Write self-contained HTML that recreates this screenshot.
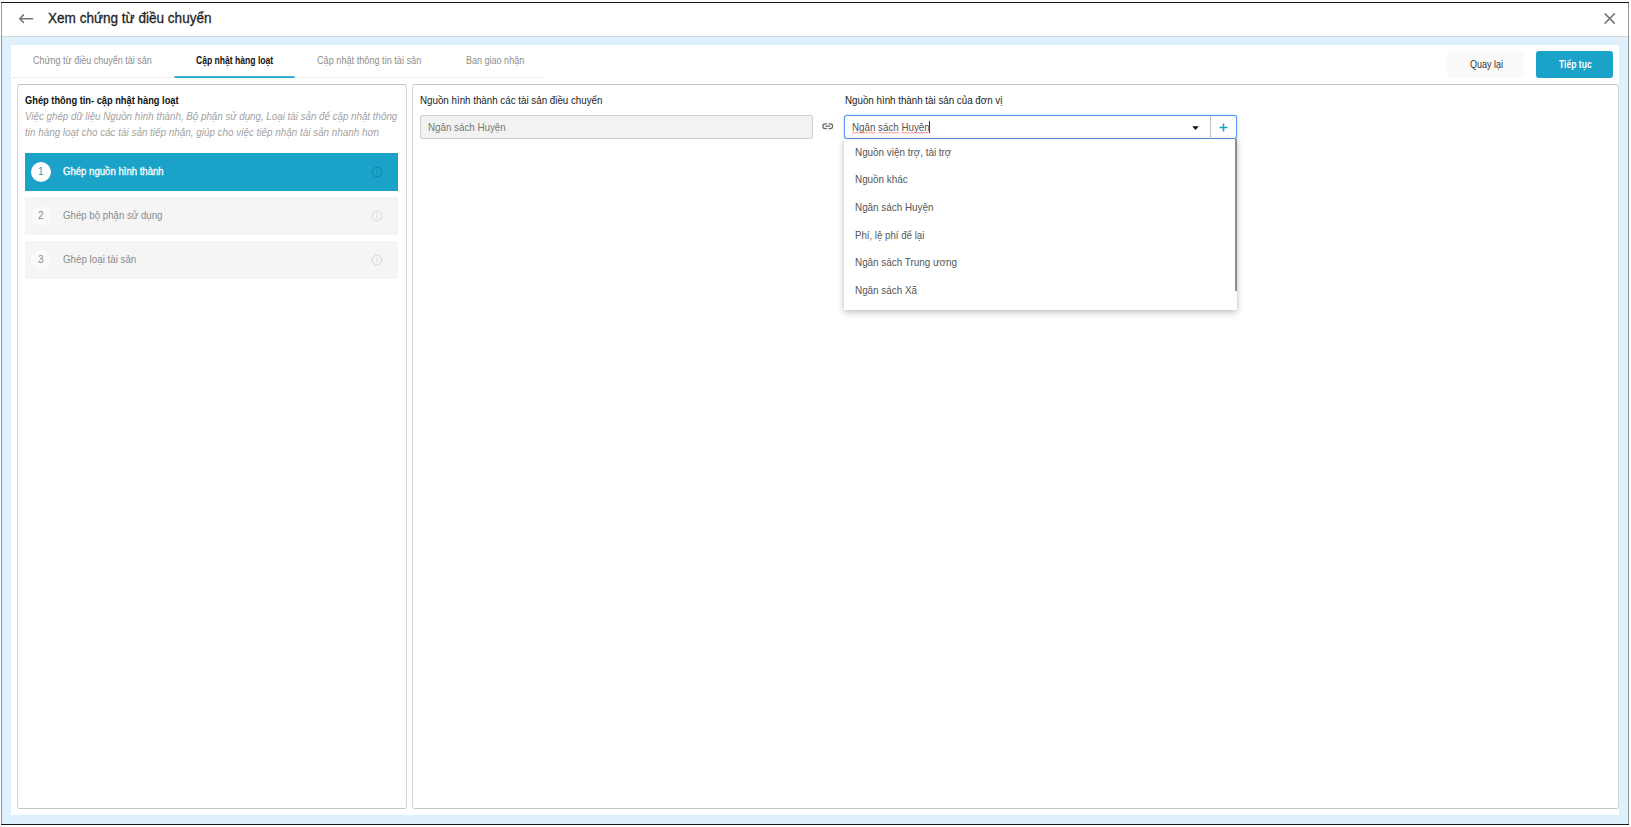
<!DOCTYPE html>
<html lang="vi">
<head>
<meta charset="utf-8">
<title>Xem chứng từ điều chuyển</title>
<style>
*{box-sizing:border-box;margin:0;padding:0}
html,body{width:1631px;height:827px;overflow:hidden;background:#fff}
body{position:relative;font-family:"Liberation Sans",sans-serif;font-size:11px;color:#222}
.abs{position:absolute}
.t{position:absolute;white-space:nowrap;line-height:1;transform-origin:0 0;transform:scaleX(.94)}
.t.b{transform:scaleX(.893)}
.t.m{-webkit-text-stroke:.3px currentColor}
#win{left:1px;top:2px;width:1628px;height:823px;background:#dff1fd}
.bd{position:absolute;z-index:9}
#hdr{left:1px;top:3px;width:1628px;height:34px;background:#fff;border-bottom:1px solid #d6d8da}
#card{left:11px;top:45px;width:1608px;height:770px;background:#fff}
#tabline{left:11px;top:77px;width:534px;height:1px;background:#efefef}
#tabactive{left:174px;top:76px;width:121px;height:2px;background:linear-gradient(#4db6d4 0,#4db6d4 50%,#1ba2c8 50%,#1ba2c8 100%);border-radius:0 0 2px 2px}
.btn{position:absolute;top:51px;width:77px;height:27px;border-radius:3px}
#b1{left:1447px;background:#fafafa}
#b2{left:1536px;background:#1ba2c8}
.panel{position:absolute;top:84px;height:725px;border:1px solid #d5d5d5;border-top-color:#c6c6c6;border-bottom-color:#c6c6c6;border-radius:3px;background:#fff}
#pl{left:17px;width:390px}
#pr{left:412px;width:1207px}
.step{position:absolute;left:25px;width:373px;height:38px;background:#f5f5f5}
.step.on{background:#1ba2c8}
.circ{position:absolute;left:6px;top:9px;width:20px;height:20px;border-radius:50%;background:#fafafa}
.step.on .circ{background:#fff}
.info{position:absolute;left:345.8px;top:13px;width:12px;height:12px}
#inp1{left:420px;top:115px;width:393px;height:24px;background:#f2f2f2;border:1px solid #cfcfcf;border-radius:2px}
#combo{left:844px;top:115px;width:393px;height:24px;background:#fff;border:1px solid #5b97f2;border-radius:3px;box-shadow:0 0 1.5px #5b97f2}
#sep{left:1210px;top:115.5px;width:1px;height:23px;background:#c6c6c6}
#dd{left:844px;top:139px;width:393px;height:171px;background:#fff;box-shadow:0 3px 7px rgba(0,0,0,.2), 0 0 4px rgba(0,0,0,.13)}
#thumb{left:1235px;top:139.4px;width:2px;height:152px;background:#8e8e8e}
</style>
</head>
<body>
<div id="win" class="abs"></div>
<div id="hdr" class="abs"></div>
<svg class="abs" style="left:18px;top:13px" width="16" height="12" viewBox="0 0 16 12"><path d="M5.5 1.9 L1.7 5.7 L5.5 9.5 M1.9 5.7 H14.6" fill="none" stroke="#757575" stroke-width="1.5" stroke-linecap="round" stroke-linejoin="round"/></svg>
<div class="t m" id="title" style="left:47.5px;top:11px;font-size:14px;transform:scaleX(.968);color:#1f1f1f">Xem chứng từ điều chuyển</div>
<svg class="abs" style="left:1603px;top:12px" width="14" height="14" viewBox="0 0 14 14"><path d="M2.1 1.9 L11.3 11.1 M11.3 1.9 L2.1 11.1" fill="none" stroke="#757575" stroke-width="1.5" stroke-linecap="round"/></svg>

<div id="card" class="abs"></div>
<div id="tabline" class="abs"></div>
<div id="tabactive" class="abs"></div>
<div class="t" id="tab1" style="left:33px;top:56px;font-size:10px;transform:scaleX(.902);color:#8e8e8e">Chứng từ điều chuyển tài sản</div>
<div class="t b" id="tab2" style="left:196px;top:56px;font-size:10px;transform:scaleX(.857);font-weight:bold;color:#111">Cập nhật hàng loạt</div>
<div class="t" id="tab3" style="left:317px;top:56px;font-size:10px;transform:scaleX(.915);color:#8e8e8e">Cập nhật thông tin tài sản</div>
<div class="t" id="tab4" style="left:466px;top:56px;font-size:10px;transform:scaleX(.902);color:#8e8e8e">Ban giao nhận</div>

<div id="b1" class="btn"></div>
<div id="b2" class="btn"></div>
<div class="t" id="bt1" style="left:1469.5px;top:59.5px;font-size:10px;transform:scaleX(.902);color:#333">Quay lại</div>
<div class="t b" id="bt2" style="left:1558.5px;top:59.5px;font-size:10px;transform:scaleX(.857);font-weight:bold;color:#fff">Tiếp tục</div>

<div id="pl" class="panel"></div>
<div id="pr" class="panel"></div>

<div class="t b" id="ptitle" style="left:25px;top:95.5px;font-size:10.4px;font-weight:bold;color:#111">Ghép thông tin- cập nhật hàng loạt</div>
<div class="t" id="pd1" style="left:25px;top:111.5px;font-size:10.4px;font-style:italic;color:#a2a2a2">Việc ghép dữ liệu Nguồn hình thành, Bộ phận sử dụng, Loại tài sản để cập nhật thông</div>
<div class="t" id="pd2" style="left:25px;top:127.5px;font-size:10.4px;transform:scaleX(.95);font-style:italic;color:#a2a2a2">tin hàng loạt cho các tài sản tiếp nhận, giúp cho việc tiếp nhận tài sản nhanh hơn</div>

<div class="step on" style="top:153px"><div class="circ"></div>
<svg class="info" viewBox="0 0 12 12"><circle cx="6" cy="6" r="4.85" fill="none" stroke="#0f86a8" stroke-width="1"/><path d="M6 5.2V8.6M6 3.3V4.2" stroke="#0f86a8" stroke-width="1"/></svg></div>
<div class="step" style="top:197px"><div class="circ"></div>
<svg class="info" viewBox="0 0 12 12"><circle cx="6" cy="6" r="4.85" fill="none" stroke="#d6d6d6" stroke-width="1"/><path d="M6 5.2V8.6M6 3.3V4.2" stroke="#d6d6d6" stroke-width="1"/></svg></div>
<div class="step" style="top:241px"><div class="circ"></div>
<svg class="info" viewBox="0 0 12 12"><circle cx="6" cy="6" r="4.85" fill="none" stroke="#d6d6d6" stroke-width="1"/><path d="M6 5.2V8.6M6 3.3V4.2" stroke="#d6d6d6" stroke-width="1"/></svg></div>
<div class="t" id="n1" style="left:38.3px;top:165.5px;font-size:10.6px;color:#1ba2c8">1</div>
<div class="t" id="n2" style="left:38.3px;top:209.5px;font-size:10.6px;color:#8a8a8a">2</div>
<div class="t" id="n3" style="left:38.3px;top:253.5px;font-size:10.6px;color:#8a8a8a">3</div>
<div class="t m" id="s1" style="left:62.5px;top:166.5px;font-size:10.4px;transform:scaleX(.922);color:#fff">Ghép nguồn hình thành</div>
<div class="t" id="s2" style="left:62.5px;top:210.5px;font-size:10.4px;transform:scaleX(.93);color:#8a8a8a">Ghép bộ phận sử dụng</div>
<div class="t" id="s3" style="left:62.5px;top:254.5px;font-size:10.4px;color:#8a8a8a">Ghép loại tài sản</div>

<div class="t" id="l1" style="left:420px;top:96px;font-size:10.4px;color:#222">Nguồn hình thành các tài sản điều chuyển</div>
<div id="inp1" class="abs"></div>
<div class="t" id="v1" style="left:428px;top:123px;font-size:10.4px;color:#777">Ngân sách Huyện</div>
<svg class="abs" style="left:821.8px;top:122.6px" width="12" height="7" viewBox="0 0 12 7"><path d="M4.5 0.8H3.2a2.4 2.4 0 0 0 0 4.8H4.5M6.9 0.8H8.2a2.4 2.4 0 0 1 0 4.8H6.9M3.7 3.2H7.7" fill="none" stroke="#6a6a6a" stroke-width="1.25" stroke-linecap="round"/></svg>

<div class="t" id="l2" style="left:844.5px;top:96px;font-size:10.4px;color:#222">Nguồn hình thành tài sản của đơn vị</div>
<div id="combo" class="abs"></div>
<div id="sep" class="abs"></div>
<div class="t" id="v2" style="left:852.4px;top:123px;font-size:10.4px;color:#555">Ngân sách Huyện</div>
<svg class="abs" style="left:0;top:0;pointer-events:none" width="1631" height="140" viewBox="0 0 1631 140"><path d="M852.2 133.2 L853.7 132.3 L855.2 133.2 L856.7 132.3 L858.2 133.2 L859.7 132.3 L861.2 133.2 L862.7 132.3 L864.2 133.2 L865.7 132.3 L867.2 133.2 L868.7 132.3 L870.2 133.2 L871.7 132.3 L873.2 133.2 L874.7 132.3 L875.0 133.2 M878.3 133.2 L879.8 132.3 L881.3 133.2 L882.8 132.3 L884.3 133.2 L885.8 132.3 L887.3 133.2 L888.8 132.3 L890.3 133.2 L891.8 132.3 L893.3 133.2 L894.8 132.3 L896.3 133.2 L897.8 132.3 L899.3 133.2 M901.5 133.2 L903.0 132.3 L904.5 133.2 L906.0 132.3 L907.5 133.2 L909.0 132.3 L910.5 133.2 L912.0 132.3 L913.5 133.2 L915.0 132.3 L916.5 133.2 L918.0 132.3 L919.5 133.2 L921.0 132.3 L922.5 133.2 L924.0 132.3 L925.5 133.2 L927.0 132.3 L928.5 133.2 L929.4 132.3" fill="none" stroke="#ff7070" stroke-width=".8"/></svg>
<div class="abs" style="left:929.3px;top:121.2px;width:1px;height:11.6px;background:#3a3a3a"></div>
<svg class="abs" style="left:1192px;top:126px" width="7" height="4" viewBox="0 0 7 4"><path d="M0.2 0.2H6.8L3.5 3.9Z" fill="#111"/></svg>
<svg class="abs" style="left:1219.1px;top:122.7px" width="9" height="9" viewBox="0 0 9 9"><path d="M4.5 0.5V8.5M0.5 4.5H8.5" stroke="#1ba2c8" stroke-width="1.6" fill="none"/></svg>

<div id="dd" class="abs"></div>
<div id="thumb" class="abs"></div>
<div class="t dd" id="d1" style="left:854.8px;top:148px;font-size:10.4px;transform:scaleX(.95);color:#555">Nguồn viện trợ, tài trợ</div>
<div class="t dd" id="d2" style="left:854.8px;top:174.5px;font-size:10.4px;transform:scaleX(.95);color:#555">Nguồn khác</div>
<div class="t dd" id="d3" style="left:854.8px;top:203px;font-size:10.4px;transform:scaleX(.95);color:#555">Ngân sách Huyện</div>
<div class="t dd" id="d4" style="left:854.8px;top:230.5px;font-size:10.4px;transform:scaleX(.93);color:#555">Phí, lệ phí để lại</div>
<div class="t dd" id="d5" style="left:854.8px;top:258px;font-size:10.4px;transform:scaleX(.95);color:#555">Ngân sách Trung ương</div>
<div class="t dd" id="d6" style="left:854.8px;top:285.5px;font-size:10.4px;transform:scaleX(.95);color:#555">Ngân sách Xã</div>
<div class="bd" style="left:1px;top:3px;width:1px;height:821px;background:rgba(0,0,0,.38)"></div>
<div class="bd" style="left:1628px;top:3px;width:1px;height:821px;background:rgba(0,0,0,.4)"></div>
<div class="bd" style="left:1px;top:2px;width:1628px;height:1px;background:#171717"></div>
<div class="bd" style="left:1px;top:824px;width:1628px;height:1px;background:#171717"></div>
</body>
</html>
